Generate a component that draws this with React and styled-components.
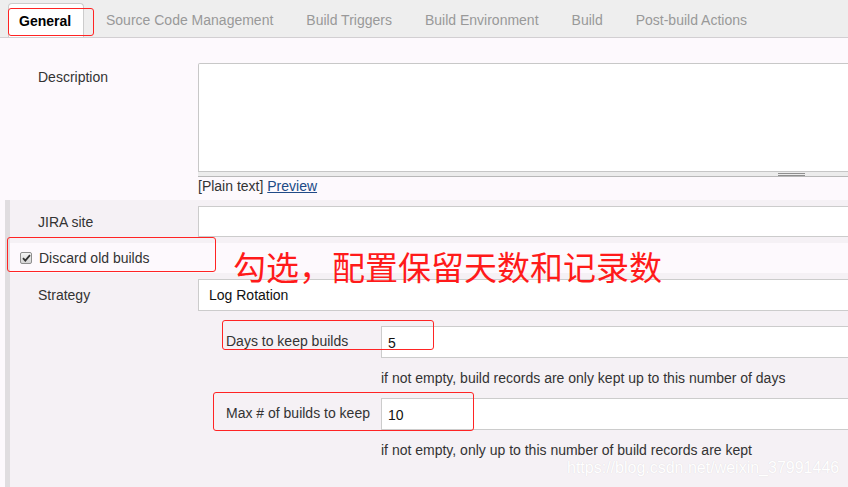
import React from "react";
import styled, { createGlobalStyle } from "styled-components";

const Global = createGlobalStyle`
  html, body { margin: 0; padding: 0; overflow: hidden; background: #fdf9fd; }
  body { font-family: "Liberation Sans", Arial, sans-serif; font-size: 14px; color: #333; }
  #root { width: 848px; height: 487px; overflow: hidden; }
`;

const Page = styled.div`
  position: relative;
  width: 1385px;
  height: 487px;
`;

const TabBar = styled.div`
  display: flex;
  align-items: flex-end;
  height: 37px;
  background: #eeeeee;
  border-bottom: 1px solid #d2cfd2;
  padding-left: 8px;
`;

const Tab = styled.div`
  display: flex;
  align-items: center;
  box-sizing: border-box;
  height: 34px;
  padding: 0 16.5px;
  color: #999;
  font-size: 14px;
  white-space: nowrap;
`;

const ActiveTab = styled(Tab)`
  width: 76px;
  padding: 0 10px;
  margin-right: 5.5px;
  background: #fff;
  border: 1px solid #cccccc;
  border-bottom: none;
  border-radius: 4px 4px 0 0;
  color: #000;
  font-weight: bold;
`;

const DescRow = styled.div`
  display: grid;
  grid-template-columns: 198px 1187px;
  padding-top: 25px;
`;

const Label = styled.div`
  padding-left: ${(p) => p.$indent ?? 38}px;
  padding-top: ${(p) => p.$top ?? 0}px;
  padding-bottom: ${(p) => p.$bottom ?? 0}px;
  line-height: 16px;
  color: #333;
  white-space: nowrap;
`;

const TextArea = styled.div`
  box-sizing: border-box;
  height: 108px;
  background: #fff;
  border: 1px solid #c8c8c8;
  border-bottom: none;
  border-radius: 2px 2px 0 0;
`;

const ResizeBar = styled.div`
  box-sizing: border-box;
  height: 6px;
  background: #ececec;
  border-top: 1px solid #c6c6c6;
  border-bottom: 1px solid #b8b8b8;
  display: flex;
  justify-content: center;
  align-items: center;
`;

const Grip = styled.div`
  width: 27px;
  height: 1px;
  border-top: 1px solid #8f8f8f;
  border-bottom: 1px solid #8f8f8f;
`;

const PlainRow = styled.div`
  padding-left: 198px;
  margin-top: 1px;
  line-height: 16px;
  color: #333;
`;

const PreviewLink = styled.a`
  color: #204a87;
  text-decoration: underline;
`;

const Section = styled.div`
  display: flow-root;
  margin-top: 6px;
  margin-left: 5px;
  border-left: 5px solid #e0dde0;
  background: #f5f1f5;
  height: 300px;
`;

const FieldRow = styled.div`
  display: grid;
  grid-template-columns: ${(p) => p.$labelWidth ?? 188}px 1187px;
  align-items: center;
  margin-top: ${(p) => p.$gap ?? 6}px;
`;

const Input = styled.div`
  box-sizing: border-box;
  height: ${(p) => p.$h ?? 32}px;
  background: #fff;
  border: 1px solid #cccccc;
  display: flex;
  align-items: center;
  padding-left: ${(p) => p.$pad ?? 6}px;
  color: #111;
  font-size: 14px;
  padding-top: ${(p) => p.$nudge ?? 0}px;
`;

const CheckRow = styled.div`
  display: flex;
  align-items: center;
  height: 30px;
  margin-top: 6px;
  padding-left: 10px;
  gap: 7px;
  background: #fdf9fd;
`;

const CheckBox = styled.span`
  box-sizing: border-box;
  width: 12px;
  height: 12px;
  border: 1px solid #8e8e8e;
  border-radius: 2px;
  background: linear-gradient(#f4f4f4, #d6d6d6);
  display: flex;
  align-items: center;
  justify-content: center;
`;

const Nested = styled.div`
  margin-left: 188px;
  padding-top: 9px;
`;

const Help = styled.div`
  padding-left: 183px;
  line-height: 16px;
  padding-top: 12px;
  color: #333;
  white-space: nowrap;
`;

const RedBox = styled.div`
  position: absolute;
  left: ${(p) => p.$x}px;
  top: ${(p) => p.$y}px;
  width: ${(p) => p.$w}px;
  height: ${(p) => p.$h}px;
  box-sizing: border-box;
  border: 1px solid #ff2424;
  border-radius: 3px;
  pointer-events: none;
`;

const Note = styled.div`
  position: absolute;
  left: 233px;
  top: 250px;
  font-family: "Noto Sans CJK SC", "Noto Sans", sans-serif;
  font-size: 33px;
  line-height: 33px;
  color: #ff1a1a;
  white-space: nowrap;
`;

const Watermark = styled.div`
  position: absolute;
  left: 567px;
  top: 459px;
  font-size: 16px;
  line-height: 18px;
  color: #ffffff;
  text-shadow: 0 0 1px #d8d4d8;
  white-space: nowrap;
`;

export default function App() {
  return (
    <Page>
      <Global />
      <TabBar>
        <ActiveTab>General</ActiveTab>
        <Tab>Source Code Management</Tab>
        <Tab>Build Triggers</Tab>
        <Tab>Build Environment</Tab>
        <Tab>Build</Tab>
        <Tab>Post-build Actions</Tab>
      </TabBar>

      <DescRow>
        <Label $top={6}>Description</Label>
        <div>
          <TextArea />
          <ResizeBar>
            <Grip />
          </ResizeBar>
        </div>
      </DescRow>
      <PlainRow>
        [Plain text] <PreviewLink href="#">Preview</PreviewLink>
      </PlainRow>

      <Section>
        <FieldRow>
          <Label $indent={28}>JIRA site</Label>
          <Input $h={31} />
        </FieldRow>
        <CheckRow>
          <CheckBox>
            <svg width="9" height="8" viewBox="0 0 9 8">
              <path d="M1 4.2 L3.3 6.6 L8 1.2" fill="none" stroke="#333" strokeWidth="1.8" />
            </svg>
          </CheckBox>
          <Label $indent={0}>Discard old builds</Label>
        </CheckRow>
        <FieldRow>
          <Label $indent={28}>Strategy</Label>
          <Input $pad={10}>Log Rotation</Input>
        </FieldRow>
        <Nested>
          <FieldRow $labelWidth={183} $gap={6}>
            <Label $indent={28} $bottom={3}>Days to keep builds</Label>
            <Input $nudge={2}>5</Input>
          </FieldRow>
          <Help>if not empty, build records are only kept up to this number of days</Help>
          <FieldRow $labelWidth={183} $gap={12}>
            <Label $indent={28} $bottom={3}>Max # of builds to keep</Label>
            <Input $nudge={2}>10</Input>
          </FieldRow>
          <Help>if not empty, only up to this number of build records are kept</Help>
        </Nested>
      </Section>

      <RedBox $x={8} $y={8} $w={86} $h={28} />
      <RedBox $x={7} $y={237} $w={209} $h={35} />
      <RedBox $x={222} $y={320} $w={212} $h={30} />
      <RedBox $x={213} $y={392} $w={261} $h={39} />
      <Note>勾选，配置保留天数和记录数</Note>
      <Watermark>https://blog.csdn.net/weixin_37991446</Watermark>
    </Page>
  );
}
